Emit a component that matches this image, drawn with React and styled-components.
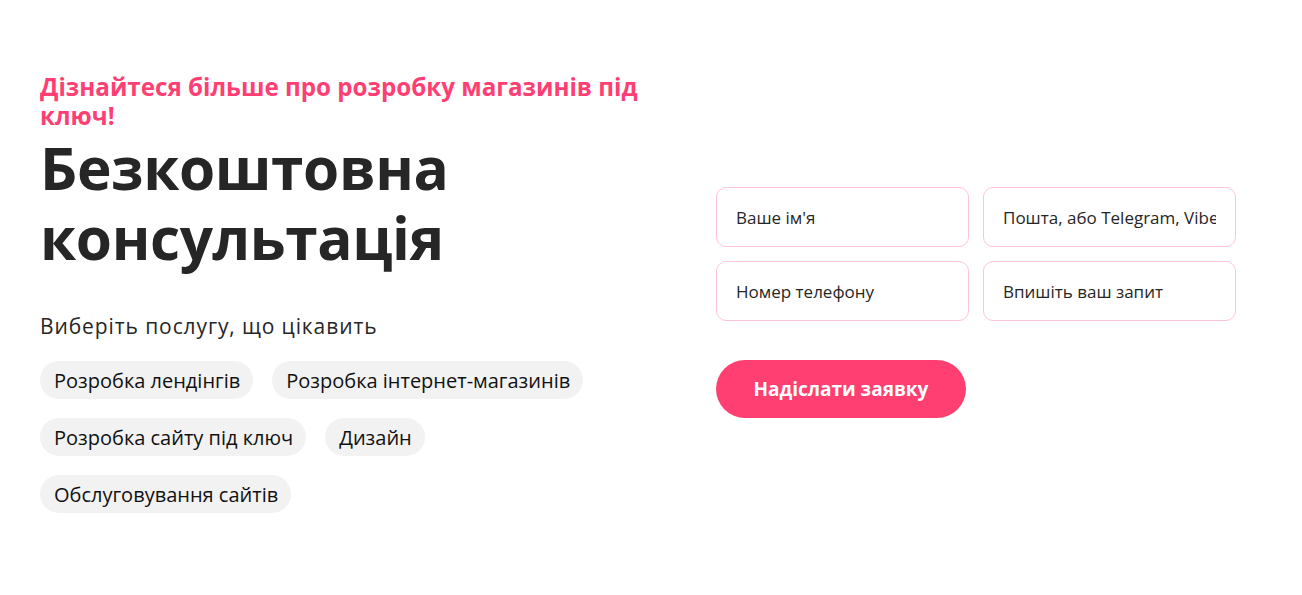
import React from "react";
import styled, { createGlobalStyle } from "styled-components";

const Global = createGlobalStyle`
  * { box-sizing: border-box; }
  body {
    margin: 0;
    background: #ffffff;
    font-family: "Open Sans", "Noto Sans", sans-serif;
    color: #262626;
  }
`;

const Section = styled.section`
  display: grid;
  grid-template-columns: 636px 520px;
  column-gap: 40px;
  align-items: center;
  padding: 72px 66px 70px 40px;
`;

const Left = styled.div`
  display: flex;
  flex-direction: column;
`;

const Kicker = styled.p`
  margin: 0;
  max-width: 620px;
  font-size: 24.2px;
  line-height: 29px;
  font-weight: 700;
  color: #ff3f74;
`;

const Title = styled.h1`
  margin: 2px 0 0;
  font-size: 58.5px;
  line-height: 70px;
  font-weight: 700;
  color: #262626;
  letter-spacing: -0.4px;
`;

const Lead = styled.p`
  margin: 40px 0 0;
  font-size: 21px;
  line-height: 28px;
  font-weight: 400;
  letter-spacing: 0.9px;
  color: #262626;
`;

const Chips = styled.div`
  display: flex;
  flex-direction: column;
  gap: 19px;
  margin-top: 21px;
`;

const ChipRow = styled.div`
  display: flex;
  gap: 19px;
`;

const Chip = styled.button`
  height: 38px;
  padding: 0 13px 0 14px;
  border: none;
  border-radius: 19px;
  background: #f2f2f2;
  font-family: inherit;
  font-size: 20px;
  color: #111111;
  cursor: pointer;
`;

const Form = styled.form`
  display: flex;
  flex-direction: column;
  min-width: 0;
  padding-top: 20px;
`;

const Fields = styled.div`
  display: grid;
  grid-template-columns: minmax(0, 1fr) minmax(0, 1fr);
  gap: 14px;
`;

const Field = styled.input`
  width: 100%;
  min-width: 0;
  height: 60px;
  padding: 0 19px;
  border: 1px solid #ffc4d5;
  border-radius: 10px;
  font-family: inherit;
  font-size: 17px;
  color: #262626;
  outline: none;
  background: #fff;

  &::placeholder {
    color: #262626;
  }
`;

const Submit = styled.button`
  margin-top: 39px;
  width: 250px;
  height: 58px;
  border: none;
  border-radius: 29px;
  background: #ff3e72;
  color: #ffffff;
  font-family: inherit;
  font-size: 19px;
  font-weight: 700;
  cursor: pointer;
`;

const rows = [
  ["Розробка лендінгів", "Розробка інтернет-магазинів"],
  ["Розробка сайту під ключ", "Дизайн"],
  ["Обслуговування сайтів"],
];

export default function App() {
  return (
    <>
      <Global />
      <Section>
        <Left>
          <Kicker>Дізнайтеся більше про розробку магазинів під ключ!</Kicker>
          <Title>
            Безкоштовна
            <br />
            консультація
          </Title>
          <Lead>Виберіть послугу, що цікавить</Lead>
          <Chips>
            {rows.map((row, i) => (
              <ChipRow key={i}>
                {row.map((label) => (
                  <Chip key={label} type="button">
                    {label}
                  </Chip>
                ))}
              </ChipRow>
            ))}
          </Chips>
        </Left>
        <Form onSubmit={(e) => e.preventDefault()}>
          <Fields>
            <Field placeholder="Ваше ім'я" />
            <Field placeholder="Пошта, або Telegram, Viber" />
            <Field placeholder="Номер телефону" />
            <Field placeholder="Впишіть ваш запит" />
          </Fields>
          <Submit type="submit">Надіслати заявку</Submit>
        </Form>
      </Section>
    </>
  );
}
